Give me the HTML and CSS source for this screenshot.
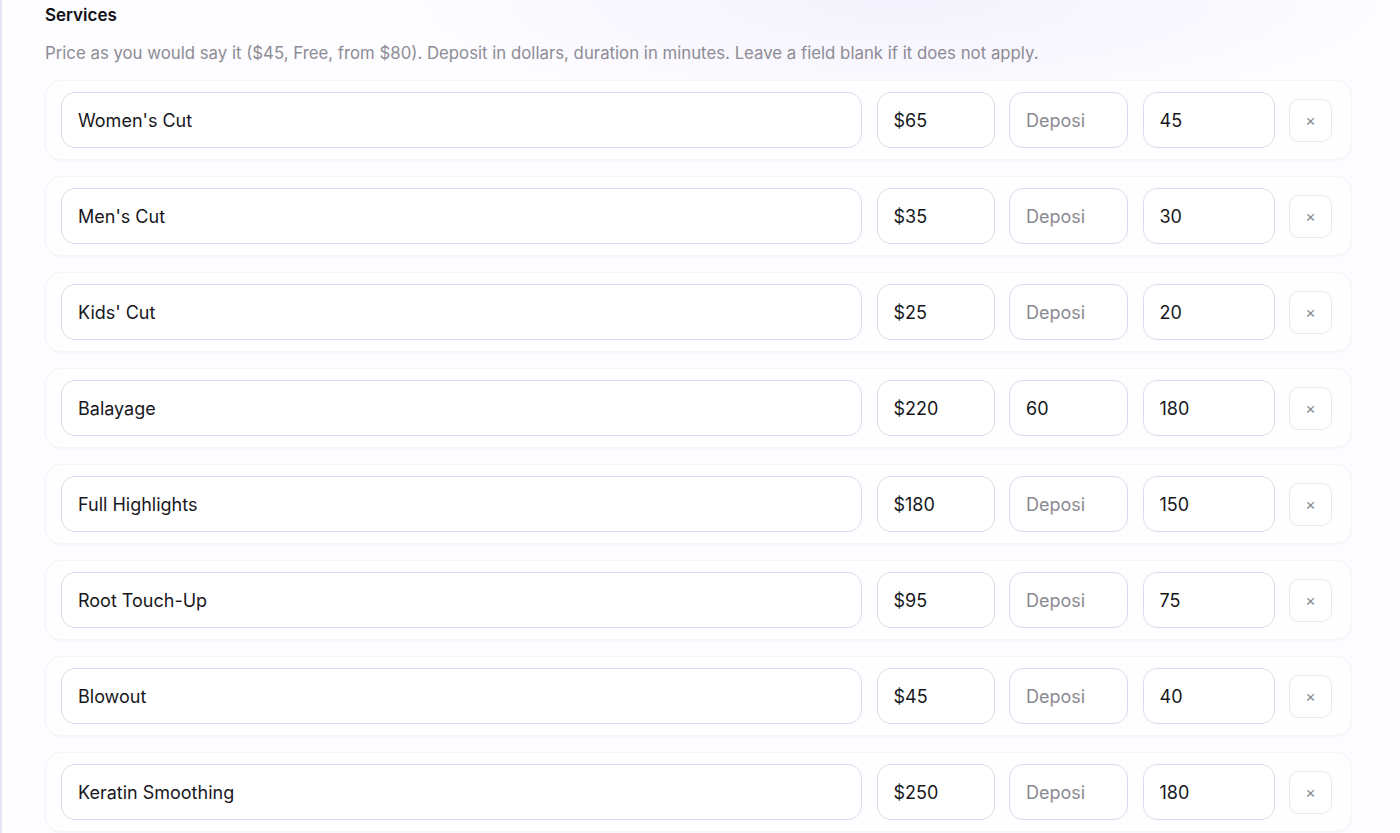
FILE: index.html
```html
<!DOCTYPE html>
<html lang="en">
<head>
<meta charset="utf-8">
<title>Services</title>
<link rel="stylesheet" href="styles.css">
</head>
<body>
<main class="page">
  <h2 class="title">Services</h2>
  <p class="hint">Price as you would say it ($45, Free, from $80). Deposit in dollars, duration in minutes. Leave a field blank if it does not apply.</p>
  <div class="list">
    <div class="row">
      <input class="field" type="text" value="Women's Cut">
      <input class="field" type="text" value="$65">
      <input class="field num" type="number" placeholder="Deposit">
      <input class="field" type="number" value="45">
      <button class="remove" type="button">×</button>
    </div>
    <div class="row">
      <input class="field" type="text" value="Men's Cut">
      <input class="field" type="text" value="$35">
      <input class="field num" type="number" placeholder="Deposit">
      <input class="field" type="number" value="30">
      <button class="remove" type="button">×</button>
    </div>
    <div class="row">
      <input class="field" type="text" value="Kids' Cut">
      <input class="field" type="text" value="$25">
      <input class="field num" type="number" placeholder="Deposit">
      <input class="field" type="number" value="20">
      <button class="remove" type="button">×</button>
    </div>
    <div class="row">
      <input class="field" type="text" value="Balayage">
      <input class="field" type="text" value="$220">
      <input class="field num" type="number" placeholder="Deposit" value="60">
      <input class="field" type="number" value="180">
      <button class="remove" type="button">×</button>
    </div>
    <div class="row">
      <input class="field" type="text" value="Full Highlights">
      <input class="field" type="text" value="$180">
      <input class="field num" type="number" placeholder="Deposit">
      <input class="field" type="number" value="150">
      <button class="remove" type="button">×</button>
    </div>
    <div class="row">
      <input class="field" type="text" value="Root Touch-Up">
      <input class="field" type="text" value="$95">
      <input class="field num" type="number" placeholder="Deposit">
      <input class="field" type="number" value="75">
      <button class="remove" type="button">×</button>
    </div>
    <div class="row">
      <input class="field" type="text" value="Blowout">
      <input class="field" type="text" value="$45">
      <input class="field num" type="number" placeholder="Deposit">
      <input class="field" type="number" value="40">
      <button class="remove" type="button">×</button>
    </div>
    <div class="row">
      <input class="field" type="text" value="Keratin Smoothing">
      <input class="field" type="text" value="$250">
      <input class="field num" type="number" placeholder="Deposit">
      <input class="field" type="number" value="180">
      <button class="remove" type="button">×</button>
    </div>
  </div>
</main>
</body>
</html>
```

FILE: styles.css
```css
html, body {
  margin: 0;
  padding: 0;
}
body {
  font-family: Inter, "Noto Sans", "Liberation Sans", sans-serif;
  color: #17171c;
  background: #fdfcff;
  overflow: hidden;
}
.page {
  min-height: 833px;
  box-sizing: border-box;
  border-left: 2px solid #e6e3f3;
  padding: 4px 48px 0 43px;
  background:
    radial-gradient(ellipse 700px 160px at 900px 0px, rgba(236, 232, 250, 0.55), rgba(255,255,255,0) 70%),
    #fdfcff;
}
.title {
  margin: 0;
  font-size: 17px;
  font-weight: 600;
  line-height: 22px;
  color: #111116;
}
.hint {
  margin: 16px 0 0;
  font-size: 16.8px;
  line-height: 22px;
  color: #8d8c96;
}
.list {
  margin-top: 16px;
  display: flex;
  flex-direction: column;
  gap: 16px;
}
.row {
  display: grid;
  grid-template-columns: 1fr 118px 119px 132px 43px;
  column-gap: 14.5px;
  align-items: center;
  padding: 11px 19px 11px 15px;
  background: #fefeff;
  border: 1px solid #f4f3f9;
  border-radius: 16px;
  box-shadow: 0 1px 2px rgba(90, 80, 140, 0.04);
}
.field {
  box-sizing: border-box;
  width: 100%;
  height: 56px;
  min-width: 0;
  padding: 0 16px;
  border: 1.5px solid #dddaee;
  border-radius: 14px;
  background: #fff;
  font-family: inherit;
  font-size: 18px;
  color: #17171c;
  outline: none;
}
.field.num {
  padding-right: 27px;
}
.field::placeholder {
  color: #8a8a92;
}
.remove {
  box-sizing: border-box;
  width: 43px;
  height: 43px;
  padding: 0;
  border: 1px solid #e9e7f3;
  border-radius: 10px;
  background: #fff;
  color: #8a8a94;
  font-family: inherit;
  font-size: 16px;
  line-height: 1;
  cursor: pointer;
}
```
